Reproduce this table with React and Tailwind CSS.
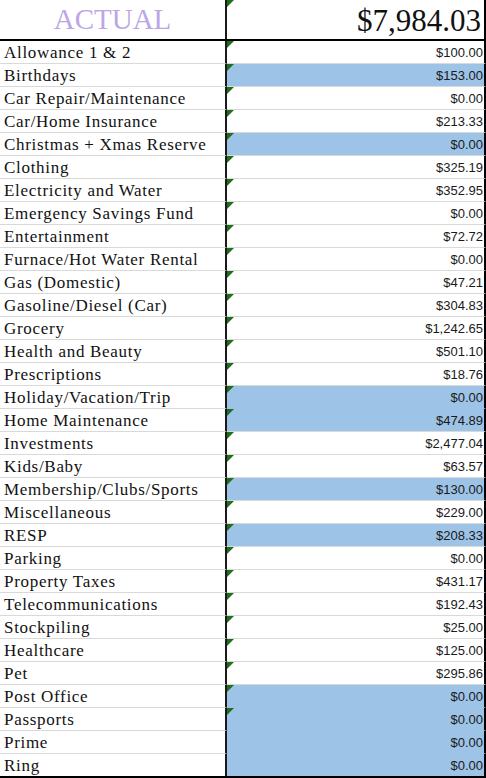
const rows = [
  ["Allowance 1 & 2", "$100.00", false, true],
  ["Birthdays", "$153.00", true, true],
  ["Car Repair/Maintenance", "$0.00", false, true],
  ["Car/Home Insurance", "$213.33", false, true],
  ["Christmas + Xmas Reserve", "$0.00", true, true],
  ["Clothing", "$325.19", false, true],
  ["Electricity and Water", "$352.95", false, true],
  ["Emergency Savings Fund", "$0.00", false, true],
  ["Entertainment", "$72.72", false, true],
  ["Furnace/Hot Water Rental", "$0.00", false, true],
  ["Gas (Domestic)", "$47.21", false, true],
  ["Gasoline/Diesel (Car)", "$304.83", false, true],
  ["Grocery", "$1,242.65", false, true],
  ["Health and Beauty", "$501.10", false, true],
  ["Prescriptions", "$18.76", false, true],
  ["Holiday/Vacation/Trip", "$0.00", true, true],
  ["Home Maintenance", "$474.89", true, true],
  ["Investments", "$2,477.04", false, true],
  ["Kids/Baby", "$63.57", false, true],
  ["Membership/Clubs/Sports", "$130.00", true, true],
  ["Miscellaneous", "$229.00", false, true],
  ["RESP", "$208.33", true, true],
  ["Parking", "$0.00", false, true],
  ["Property Taxes", "$431.17", false, true],
  ["Telecommunications", "$192.43", false, true],
  ["Stockpiling", "$25.00", false, true],
  ["Healthcare", "$125.00", false, true],
  ["Pet", "$295.86", false, true],
  ["Post Office", "$0.00", true, true],
  ["Passports", "$0.00", true, true],
  ["Prime", "$0.00", true, false],
  ["Ring", "$0.00", true, false],
];

function Flag() {
  return (
    <span className="absolute left-0 top-0 h-0 w-0 border-t-[7px] border-r-[7px] border-t-[#1d6f1d] border-r-transparent" />
  );
}

export default function App() {
  return (
    <div className="w-[486px] h-[778px] overflow-hidden bg-white border-b-2 border-black">
      {/* header */}
      <div className="flex h-[41px] border-b-2 border-black">
        <div className="flex w-[227px] items-center justify-center border-r-2 border-[#1a1a1a] font-['Liberation_Serif',serif] text-[29px] leading-none text-[#bda6e8]">
          ACTUAL
        </div>
        <div className="relative flex flex-1 items-center justify-end border-r-2 border-black pr-[3px] pt-[2px] font-['Liberation_Serif',serif] text-[31px] leading-none text-[#111]">
          <Flag />
          $7,984.03
        </div>
      </div>

      {rows.map(([label, amount, blue, flag], i) => {
        const nextBlue = rows[i + 1] && rows[i + 1][2];
        const last = i === rows.length - 1;
        return (
          <div key={label} className={last ? "flex h-[22px]" : "flex h-[23px]"}>
            <div
              className={
                "flex w-[227px] items-center border-r-2 border-[#1a1a1a] pl-[4px] font-['Liberation_Serif',serif] text-[17px] leading-none tracking-[0.7px] text-[#111] " +
                (last ? "" : "border-b border-b-[#d9d9d9]")
              }
            >
              {label}
            </div>
            <div
              className={
                "relative flex flex-1 items-center justify-end border-r-2 border-black pr-[1px] font-['Liberation_Sans',Arial,sans-serif] text-[13px] leading-none text-[#1a1a1a] " +
                (blue ? "bg-[#9dc3e6] " : "bg-white ") +
                (last ? "" : blue && nextBlue ? "border-b border-b-[#9dc3e6]" : "border-b border-b-[#d9d9d9]")
              }
            >
              {flag && <Flag />}
              {amount}
            </div>
          </div>
        );
      })}
    </div>
  );
}
